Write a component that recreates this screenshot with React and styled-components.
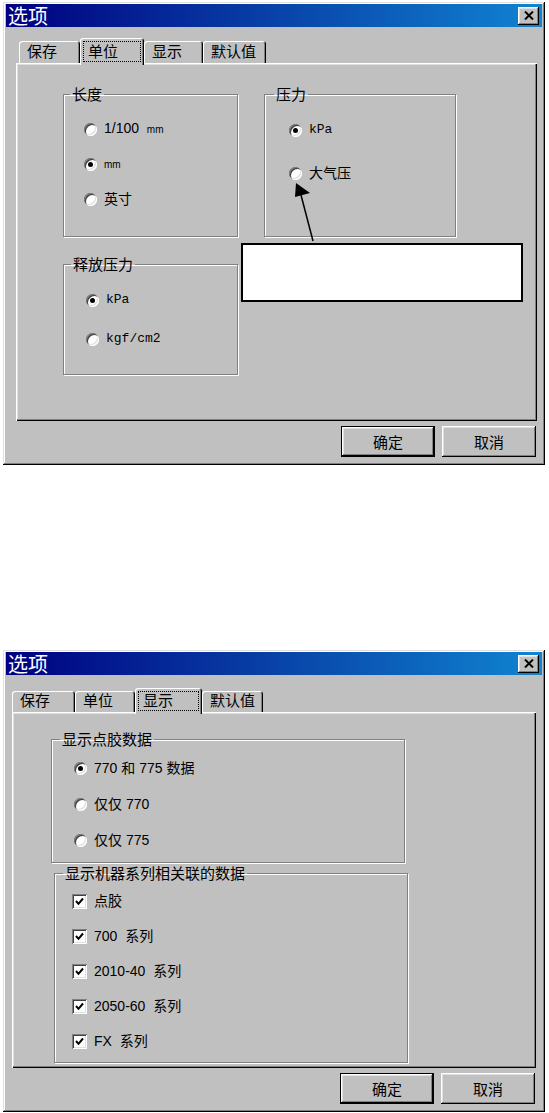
import React from 'react'
import styled, { createGlobalStyle } from 'styled-components'

const GlobalStyle = createGlobalStyle`
  html, body { margin: 0; padding: 0; background: #fff; }
  body { font-family: "Noto Sans CJK SC", sans-serif; color: #000; }
`

const raised = 'inset -1px -1px 0 #000, inset 1px 1px 0 #fff, inset -2px -2px 0 #808080, inset 2px 2px 0 #dfdfdf'
const sunken = 'inset 1px 1px 0 #808080, inset -1px -1px 0 #fff, inset 2px 2px 0 #404040, inset -2px -2px 0 #dfdfdf'

const Page = styled.div`
  width: 549px;
  box-sizing: border-box;
  padding: 2px 0 0 3px;
  display: flex;
  flex-direction: column;
  gap: 185px;
`

const Window = styled.div`
  box-sizing: border-box;
  width: 542px;
  height: ${p => p.$h}px;
  padding: 2px 3px 3px;
  background: #c0c0c0;
  box-shadow: inset -1px -1px 0 #000, inset 1px 1px 0 #dfdfdf, inset -2px -2px 0 #808080, inset 2px 2px 0 #fff;
  display: flex;
  flex-direction: column;
`

const TitleBar = styled.div`
  flex: none;
  height: 23px;
  display: flex;
  align-items: center;
  justify-content: space-between;
  padding: 0 3px 0 2px;
  background: linear-gradient(to right, #000080, #1084d0);
`

const Title = styled.span`
  color: #fff;
  font-size: 20px;
  line-height: 23px;
`

const CloseButton = styled.div`
  width: 21px;
  height: 18px;
  background: #c0c0c0;
  box-shadow: ${raised};
  display: flex;
  align-items: center;
  justify-content: center;
`

const Body = styled.div`
  flex: 1;
  min-height: 0;
  display: flex;
  flex-direction: column;
  padding: ${p => p.$top}px ${p => p.$side[1]}px 5px ${p => p.$side[0]}px;
`

const TabRow = styled.div`
  flex: none;
  position: relative;
  z-index: 1;
  height: ${p => p.$h}px;
  display: flex;
  align-items: flex-end;
  padding-left: ${p => p.$pl}px;
`

const Tab = styled.div`
  box-sizing: border-box;
  width: ${p => p.$w}px;
  height: ${p => (p.$active ? p.$h + 2 : p.$h - 3)}px;
  margin-bottom: ${p => (p.$active ? -2 : 0)}px;
  padding: ${p => (p.$active ? '3px 3px 3px' : '2px 3px 3px')};
  background: #c0c0c0;
  border-radius: 3px 3px 0 0;
  box-shadow: inset 1px 1px 0 #fff, inset -1px 0 0 #000, inset -2px 0 0 #808080;
  display: flex;
`

const TabLabel = styled.span`
  flex: 1;
  box-sizing: border-box;
  display: flex;
  align-items: center;
  border: 1px dotted ${p => (p.$focus ? '#000' : 'transparent')};
  padding: 0 0 2px 4px;
  font-size: 15px;
  line-height: 16px;
  white-space: nowrap;
`

const Panel = styled.div`
  position: relative;
  flex: 1;
  min-height: 0;
  background: #c0c0c0;
  box-shadow: inset 1px 1px 0 #fff, inset -1px -1px 0 #000, inset -2px -2px 0 #808080, inset 2px 2px 0 #dfdfdf;
`

const UnitsLayout = styled.div`
  display: grid;
  grid-template-columns: 175px 192px;
  grid-template-rows: 151px 119px;
  column-gap: 26px;
  row-gap: 19px;
  padding: 23px 0 0 47px;
`

const DisplayLayout = styled.div`
  display: flex;
  flex-direction: column;
  gap: 2px;
  padding: 19px 0 0 39px;
`

const Group = styled.fieldset`
  box-sizing: border-box;
  min-width: 0;
  margin: 0 0 0 ${p => p.$shift || 0}px;
  padding: 0;
  width: ${p => (p.$w ? `${p.$w}px` : 'auto')};
  height: ${p => p.$h}px;
  border: 1px solid #808080;
  box-shadow: 1px 1px 0 #fff, inset 1px 1px 0 #fff;
`

const Legend = styled.legend`
  margin-left: ${p => p.$ml}px;
  padding: 0 2px;
  font-size: 15px;
  line-height: 16px;
`

const OptionList = styled.div`
  display: flex;
  flex-direction: column;
  gap: ${p => p.$gap}px;
  padding: ${p => p.$pt}px 0 0 ${p => p.$pl}px;
`

const Option = styled.div`
  height: 20px;
  display: flex;
  align-items: center;
  gap: ${p => p.$gap || 7}px;
`

const Radio = styled.span`
  position: relative;
  flex: none;
  width: 13px;
  height: 13px;
  border-radius: 50%;
  background: #fff;
  box-shadow: ${sunken};
  &::after {
    content: '';
    display: ${p => (p.$checked ? 'block' : 'none')};
    position: absolute;
    left: 4px;
    top: 4px;
    width: 5px;
    height: 5px;
    border-radius: 50%;
    background: #000;
  }
`

const Check = styled.span`
  flex: none;
  width: 15px;
  height: 15px;
  background: #fff;
  box-shadow: ${sunken};
  display: flex;
  align-items: center;
  justify-content: center;
`

const Label = styled.span`
  font-family: ${p => (p.$mono ? '"Liberation Mono"' : '"Liberation Sans"')}, "Noto Sans CJK SC", sans-serif;
  font-size: ${p => (p.$mono ? 13 : 14)}px;
  line-height: 20px;
  white-space: pre;
`

const Small = styled.span`
  font-size: 10px;
`

const Annotation = styled.div`
  position: absolute;
  left: 225px;
  top: 180px;
  width: 282px;
  height: 59px;
  box-sizing: border-box;
  border: 2px solid #000;
  background: #fff;
`

const Pointer = styled.svg`
  position: absolute;
  left: 264px;
  top: 112px;
`

const ButtonRow = styled.div`
  flex: none;
  display: flex;
  justify-content: flex-end;
  gap: 7px;
  margin-top: 5px;
  padding-right: 1px;
`

const DialogButton = styled.div`
  box-sizing: border-box;
  width: ${p => p.$w}px;
  height: 31px;
  background: #c0c0c0;
  border: ${p => (p.$default ? '1px solid #000' : 'none')};
  box-shadow: ${raised};
  display: flex;
  align-items: center;
  justify-content: center;
  font-size: 15px;
`

const CloseIcon = () => (
  <svg width="10" height="9" viewBox="0 0 10 9">
    <path d="M1 0.5 L9 8.5 M9 0.5 L1 8.5" stroke="#000" strokeWidth="2" />
  </svg>
)

const CheckIcon = () => (
  <svg width="9" height="9" viewBox="0 0 9 9">
    <path d="M1 4 L3.5 6.8 L8 1.5" stroke="#000" strokeWidth="2" fill="none" />
  </svg>
)

const tabNames = ['保存', '单位', '显示', '默认值']

const Dialog = ({ h, top, side, tabH, tabPl, tabWidths, active, children }) => (
  <Window $h={h}>
    <TitleBar>
      <Title>选项</Title>
      <CloseButton><CloseIcon /></CloseButton>
    </TitleBar>
    <Body $top={top} $side={side}>
      <TabRow $h={tabH} $pl={tabPl}>
        {tabNames.map((name, i) => (
          <Tab key={name} $w={tabWidths[i]} $h={tabH} $active={i === active}>
            <TabLabel $focus={i === active}>{name}</TabLabel>
          </Tab>
        ))}
      </TabRow>
      <Panel>{children}</Panel>
      <ButtonRow>
        <DialogButton $w={94} $default>确定</DialogButton>
        <DialogButton $w={94}>取消</DialogButton>
      </ButtonRow>
    </Body>
  </Window>
)

const RadioOption = ({ checked, children }) => (
  <Option>
    <Radio $checked={checked} />
    {children}
  </Option>
)

const series = ['点胶', '700  系列', '2010-40  系列', '2050-60  系列', 'FX  系列']

const App = () => (
  <>
    <GlobalStyle />
    <Page>
      <Dialog h={463} top={11} side={[10, 5]} tabH={25} tabPl={3} tabWidths={[61, 64, 59, 63]} active={1}>
        <UnitsLayout>
          <Group>
            <Legend $ml={6}>长度</Legend>
            <OptionList $pt={17} $pl={20} $gap={15}>
              <RadioOption><Label>1/100  <Small>mm</Small></Label></RadioOption>
              <RadioOption checked><Label><Small>mm</Small></Label></RadioOption>
              <RadioOption><Label>英寸</Label></RadioOption>
            </OptionList>
          </Group>
          <Group>
            <Legend $ml={9}>压力</Legend>
            <OptionList $pt={18} $pl={24} $gap={23}>
              <RadioOption checked><Label $mono>kPa</Label></RadioOption>
              <RadioOption><Label>大气压</Label></RadioOption>
            </OptionList>
          </Group>
          <Group>
            <Legend $ml={7}>释放压力</Legend>
            <OptionList $pt={18} $pl={22} $gap={19}>
              <RadioOption checked><Label $mono>kPa</Label></RadioOption>
              <RadioOption><Label $mono>kgf/cm2</Label></RadioOption>
            </OptionList>
          </Group>
        </UnitsLayout>
        <Pointer width="40" height="70" viewBox="0 0 40 70">
          <path d="M33 66 L21 20" stroke="#000" strokeWidth="1.5" fill="none" />
          <polygon points="16,8 15,22 30,18" fill="#000" />
        </Pointer>
        <Annotation />
      </Dialog>

      <Dialog h={462} top={13} side={[6, 6]} tabH={24} tabPl={0} tabWidths={[63, 60, 67, 61]} active={2}>
        <DisplayLayout>
          <Group $w={354} $h={132}>
            <Legend $ml={8}>显示点胶数据</Legend>
            <OptionList $pt={11} $pl={22} $gap={16}>
              <RadioOption checked><Label>770 和 775 数据</Label></RadioOption>
              <RadioOption><Label>仅仅 770</Label></RadioOption>
              <RadioOption><Label>仅仅 775</Label></RadioOption>
            </OptionList>
          </Group>
          <Group $w={354} $h={198} $shift={3}>
            <Legend $ml={8}>显示机器系列相关联的数据</Legend>
            <OptionList $pt={10} $pl={17} $gap={15}>
              {series.map(s => (
                <Option key={s}>
                  <Check><CheckIcon /></Check>
                  <Label>{s}</Label>
                </Option>
              ))}
            </OptionList>
          </Group>
        </DisplayLayout>
      </Dialog>
    </Page>
  </>
)

export default App
